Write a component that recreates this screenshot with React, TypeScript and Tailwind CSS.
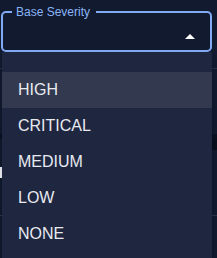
import React from 'react';

const OPTIONS = ['HIGH', 'CRITICAL', 'MEDIUM', 'LOW', 'NONE'];
const SELECTED = 'HIGH';

const font = { fontFamily: '"Liberation Sans", Arial, sans-serif' };

export default function App() {
  return (
    <div className="relative flex h-[258px] w-[217px] flex-col overflow-hidden bg-[#111a2e] pt-[5px]" style={font}>
      <fieldset className="relative ml-[1px] h-[47px] w-[211px] rounded-[5px] border-2 border-[#82aaf2] px-2">
        <legend className="ml-[1px] pl-[4px] pr-[6px] text-[12px] leading-[14px] text-[#8ab4f8]">Base Severity</legend>
        <svg className="absolute right-[8px] top-[6px] h-6 w-6 text-white" viewBox="0 0 24 24" fill="currentColor">
          <path d="m7 14 5-5 5 5z" />
        </svg>
      </fieldset>

      {/* the page behind the open menu */}
      <div className="flex flex-col">
        <div className="mt-4 h-px bg-[#253049]" />
        <div className="mt-[65px] flex h-[16px] flex-col">
          <div className="h-[5px] bg-[#0b1121]" />
          <div className="flex flex-1 justify-end">
            <div className="w-[5px] bg-[#0a0f1e]" />
          </div>
        </div>
        <div className="mt-[17px] h-[11px] w-[2px] bg-[#e8eaf0]" />
        <div className="mt-[37px] h-px bg-[#2a344d]" />
      </div>

      <ul className="absolute left-[2px] top-[52px] w-[210px] bg-[#1f2640] pt-5 pb-2 shadow-lg">
        {OPTIONS.map((opt) => (
          <li
            key={opt}
            className={
              opt === SELECTED
                ? 'bg-[#333a4f] px-4 py-1.5 text-[16px] leading-6 text-[#e8eaf0]'
                : 'px-4 py-1.5 text-[16px] leading-6 text-[#e8eaf0]'
            }
          >
            {opt}
          </li>
        ))}
      </ul>
    </div>
  );
}
